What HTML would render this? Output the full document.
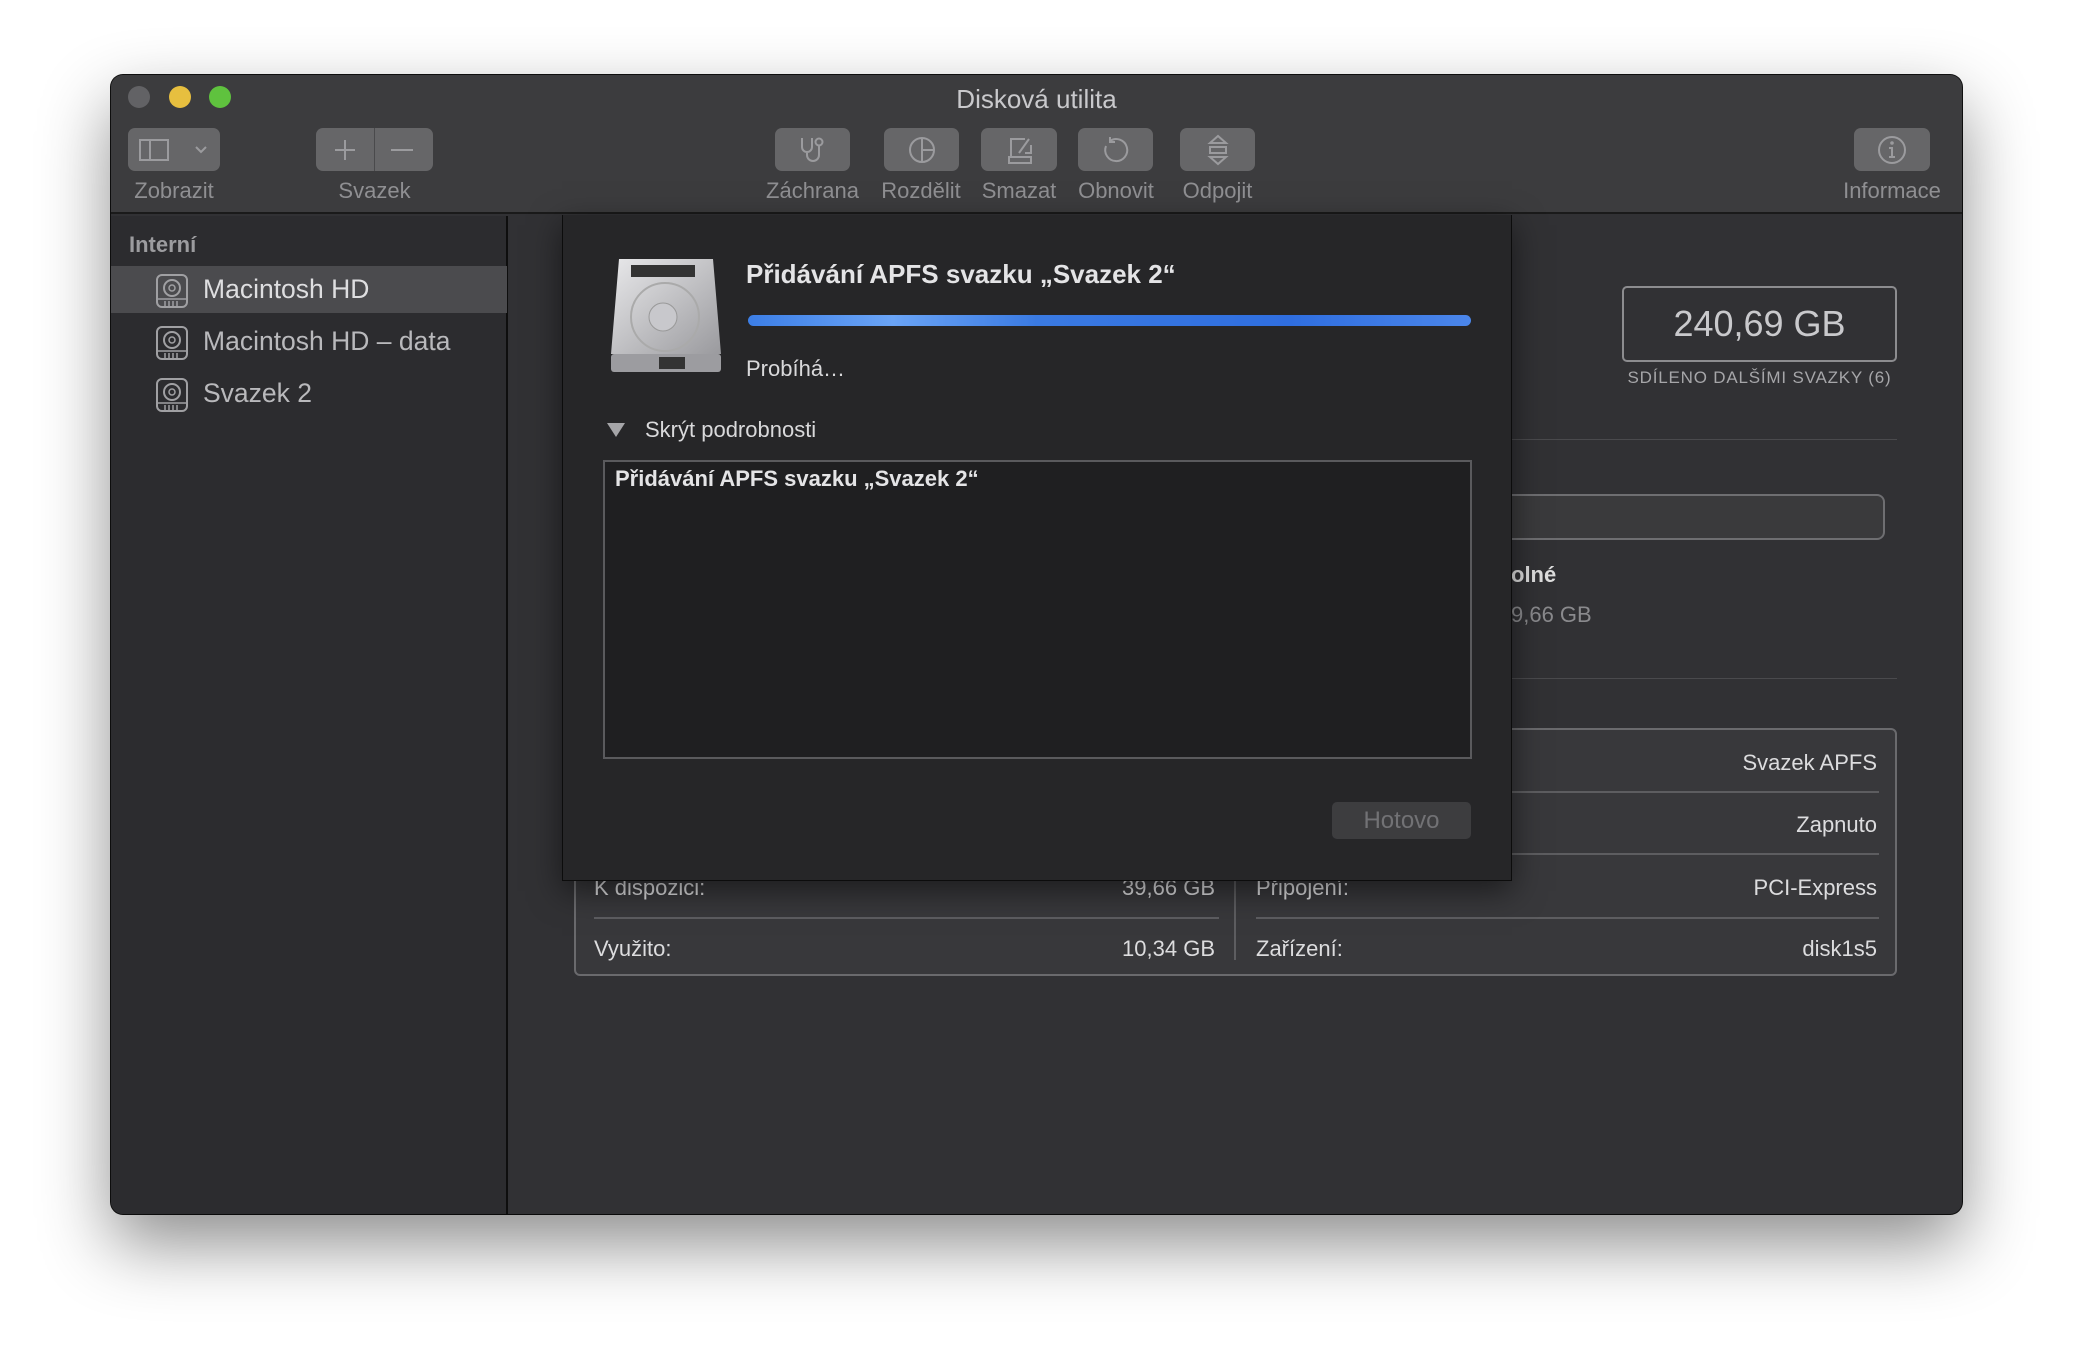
<!DOCTYPE html>
<html><head><meta charset="utf-8"><style>
*{box-sizing:border-box;margin:0;padding:0}
body{width:2074px;height:1364px;background:#fff;position:relative;overflow:hidden;font-family:"Liberation Sans",sans-serif}
.a{position:absolute}
.win{left:111px;top:75px;width:1851px;height:1139px;border-radius:12px;background:#313134;overflow:hidden;box-shadow:0 30px 70px rgba(0,0,0,.45),0 0 0 1px #111}
.tb{left:0;top:0;width:1851px;height:139px;background:#3c3c3e;border-bottom:2px solid #1a1a1a}
.tl{width:22px;height:22px;border-radius:50%;top:11px}
.btn{background:#666668;border-radius:7px;top:53px;height:43px}
.lbl{top:103px;color:#8f8f92;font-size:22px;text-align:center;white-space:nowrap}
.side{left:0;top:141px;width:397px;height:998px;background:#2c2c2f;border-right:2px solid #0e0e0e}
.item{left:0;width:396px;height:47px;color:#b9b9bc;font-size:26.5px;line-height:47px;padding-left:92px}
.hd{left:44px;top:7px}
.dlg{left:451px;top:140px;width:950px;height:666px;background:#262628;border:1px solid #0c0c0c;border-top:none;box-shadow:0 10px 30px rgba(0,0,0,.5)}
.row{color:#dcdcde;font-size:22px}
.ln{height:2px;background:#5d5d60}
</style></head><body>
<div class="a win">
 <div class="a tb">
  <div class="a tl" style="left:17px;background:#626265"></div>
  <div class="a tl" style="left:58px;background:#e7bf3f"></div>
  <div class="a tl" style="left:98px;background:#5fc23e"></div>
  <div class="a" style="left:0;width:1851px;top:9px;text-align:center;color:#c9c9cc;font-size:26px">Disková utilita</div>
  <div class="a btn" style="left:17px;width:92px">
   <svg class="a" style="left:10px;top:10px" width="72" height="24"><rect x="2" y="2" width="28" height="20" fill="none" stroke="#9b9b9e" stroke-width="2"/><line x1="12" y1="2" x2="12" y2="22" stroke="#9b9b9e" stroke-width="2"/><path d="M58 9l5 5 5-5" fill="none" stroke="#9b9b9e" stroke-width="2"/></svg>
  </div>
  <div class="a lbl" style="left:17px;width:92px">Zobrazit</div>
  <div class="a btn" style="left:205px;width:117px">
   <div class="a" style="left:58px;top:0;width:1px;height:43px;background:#4a4a4c"></div>
   <svg class="a" style="left:0;top:0" width="117" height="43"><path d="M29 12v20M19 22h20M75 22h22" stroke="#9b9b9e" stroke-width="2"/></svg>
  </div>
  <div class="a lbl" style="left:205px;width:117px">Svazek</div>
  <div class="a btn" style="left:664px;width:75px"><svg class="a" style="left:22px;top:6px" width="32" height="32"><path d="M5 4v9a5 5 0 0 0 10 0V4M10 18v3a6 6 0 0 0 12 0v-9" fill="none" stroke="#9b9b9e" stroke-width="2"/><circle cx="22" cy="8" r="3.5" fill="none" stroke="#9b9b9e" stroke-width="2"/></svg></div>
  <div class="a lbl" style="left:644px;width:115px">Záchrana</div>
  <div class="a btn" style="left:773px;width:75px"><svg class="a" style="left:23px;top:7px" width="30" height="30"><circle cx="15" cy="15" r="12" fill="none" stroke="#9b9b9e" stroke-width="2"/><path d="M15 3v24M15 15h12" fill="none" stroke="#9b9b9e" stroke-width="2"/></svg></div>
  <div class="a lbl" style="left:750px;width:120px">Rozdělit</div>
  <div class="a btn" style="left:870px;width:76px"><svg class="a" style="left:24px;top:7px" width="30" height="30"><path d="M4 22h22v6H4zM6 22V4h14M24 4l-10 14M20 18h6V10" fill="none" stroke="#9b9b9e" stroke-width="2"/></svg></div>
  <div class="a lbl" style="left:850px;width:116px">Smazat</div>
  <div class="a btn" style="left:967px;width:75px"><svg class="a" style="left:23px;top:6px" width="30" height="32"><path d="M9 7a11 11 0 1 1-4 5M9 3v5h5" fill="none" stroke="#9b9b9e" stroke-width="2"/></svg></div>
  <div class="a lbl" style="left:950px;width:110px">Obnovit</div>
  <div class="a btn" style="left:1069px;width:75px"><svg class="a" style="left:26px;top:6px" width="24" height="32"><path d="M4 9L12 2l8 7zM4 23l8 7 8-7zM4 13h16v6H4z" fill="none" stroke="#9b9b9e" stroke-width="2"/></svg></div>
  <div class="a lbl" style="left:1050px;width:113px">Odpojit</div>
  <div class="a btn" style="left:1743px;width:76px"><svg class="a" style="left:22px;top:6px" width="32" height="32"><circle cx="16" cy="16" r="13" fill="none" stroke="#9b9b9e" stroke-width="2"/><circle cx="16" cy="9" r="1.8" fill="#9b9b9e"/><path d="M13 14h3v9M13 23h6" stroke="#9b9b9e" stroke-width="2" fill="none"/></svg></div>
  <div class="a lbl" style="left:1720px;width:122px">Informace</div>
 </div>
 <div class="a side">
  <div class="a" style="left:18px;top:16px;color:#9c9c9f;font-size:22px;font-weight:bold">Interní</div>
  <div class="a item" style="top:50px;background:#4b4b4e;color:#dedee0">Macintosh HD<svg class="a hd" width="34" height="36"><rect x="2" y="2" width="30" height="32" rx="5" fill="none" stroke="#a0a0a3" stroke-width="2"/><circle cx="17" cy="15" r="8" fill="none" stroke="#a0a0a3" stroke-width="2"/><circle cx="17" cy="15" r="3" fill="none" stroke="#a0a0a3" stroke-width="1.5"/><path d="M2 26h30M10 28v5M14 28v5M18 28v5M22 28v5" stroke="#a0a0a3" stroke-width="1.5"/></svg></div>
  <div class="a item" style="top:102px">Macintosh HD – data<svg class="a hd" width="34" height="36"><rect x="2" y="2" width="30" height="32" rx="5" fill="none" stroke="#a0a0a3" stroke-width="2"/><circle cx="17" cy="15" r="8" fill="none" stroke="#a0a0a3" stroke-width="2"/><circle cx="17" cy="15" r="3" fill="none" stroke="#a0a0a3" stroke-width="1.5"/><path d="M2 26h30M10 28v5M14 28v5M18 28v5M22 28v5" stroke="#a0a0a3" stroke-width="1.5"/></svg></div>
  <div class="a item" style="top:154px">Svazek 2<svg class="a hd" width="34" height="36"><rect x="2" y="2" width="30" height="32" rx="5" fill="none" stroke="#a0a0a3" stroke-width="2"/><circle cx="17" cy="15" r="8" fill="none" stroke="#a0a0a3" stroke-width="2"/><circle cx="17" cy="15" r="3" fill="none" stroke="#a0a0a3" stroke-width="1.5"/><path d="M2 26h30M10 28v5M14 28v5M18 28v5M22 28v5" stroke="#a0a0a3" stroke-width="1.5"/></svg></div>
 </div>
 <!-- content -->
 <div class="a" style="left:1511px;top:211px;width:275px;height:76px;border:2px solid #8c8c8f;border-radius:5px;color:#c9c9cc;font-size:36px;text-align:center;line-height:72px">240,69 GB</div>
 <div class="a" style="left:1490px;top:293px;width:317px;text-align:center;color:#a6a6a9;font-size:17px;letter-spacing:.8px">SDÍLENO DALŠÍMI SVAZKY (6)</div>
 <div class="a ln" style="left:463px;top:364px;width:1323px;height:1px;background:#4a4a4d"></div>
 <div class="a" style="left:900px;top:419px;width:874px;height:46px;border:2px solid #6e6e71;border-radius:8px;background:#3a3a3c"></div>
 <div class="a" style="left:1400px;top:487px;color:#ddd;font-size:22px;font-weight:bold">olné</div>
 <div class="a" style="left:1400px;top:527px;color:#8a8a8d;font-size:22px">9,66 GB</div>
 <div class="a ln" style="left:463px;top:603px;width:1323px;height:1px;background:#4a4a4d"></div>
 <div class="a" style="left:463px;top:653px;width:1323px;height:248px;border:2px solid #6a6a6d;border-radius:6px;background:#38383b">
  <div class="a" style="left:658px;top:20px;width:2px;height:210px;background:#5d5d60"></div>
  <div class="a ln" style="left:18px;top:187px;width:625px"></div>
  <div class="a row" style="left:18px;top:145px">K dispozici:</div><div class="a row" style="right:680px;top:145px">39,66 GB</div>
  <div class="a row" style="left:18px;top:206px">Využito:</div><div class="a row" style="right:680px;top:206px">10,34 GB</div>
  <div class="a ln" style="left:680px;top:61px;width:623px"></div>
  <div class="a ln" style="left:680px;top:123px;width:623px"></div>
  <div class="a ln" style="left:680px;top:187px;width:623px"></div>
  <div class="a row" style="right:18px;top:20px">Svazek APFS</div>
  <div class="a row" style="right:18px;top:82px">Zapnuto</div>
  <div class="a row" style="left:680px;top:145px">Připojení:</div><div class="a row" style="right:18px;top:145px">PCI-Express</div>
  <div class="a row" style="left:680px;top:206px">Zařízení:</div><div class="a row" style="right:18px;top:206px">disk1s5</div>
 </div>
 <!-- dialog -->
 <div class="a dlg">
  <svg class="a" style="left:46px;top:42px" width="114" height="118"><defs><linearGradient id="g" x1="0" y1="0" x2="1" y2="1"><stop offset="0" stop-color="#e8e8ea"/><stop offset="1" stop-color="#9a9a9e"/></linearGradient></defs><path d="M10 2h94l8 95H2z" fill="url(#g)"/><rect x="2" y="97" width="110" height="18" rx="3" fill="#9c9ca0"/><circle cx="56" cy="60" r="34" fill="none" stroke="#aaa" stroke-width="2"/><circle cx="54" cy="60" r="14" fill="#c8c8cc" stroke="#999"/><rect x="22" y="8" width="64" height="12" fill="#333"/><path d="M50 100h26v12H50z" fill="#333"/></svg>
  <div class="a" style="left:183px;top:44px;color:#e4e4e6;font-size:26px;font-weight:bold">Přidávání APFS svazku „Svazek 2“</div>
  <div class="a" style="left:185px;top:100px;width:723px;height:11px;border-radius:6px;background:linear-gradient(90deg,#3c7ee6,#6aa4f6 20%,#3a7ae2 40%,#2f6ee0 75%,#4b86ea)"></div>
  <div class="a" style="left:183px;top:141px;color:#d9d9db;font-size:22px">Probíhá…</div>
  <svg class="a" style="left:43px;top:206px" width="20" height="18"><path d="M1 2h18L10 16z" fill="#a5a5a8"/></svg>
  <div class="a" style="left:82px;top:202px;color:#d9d9db;font-size:22px">Skrýt podrobnosti</div>
  <div class="a" style="left:40px;top:245px;width:869px;height:299px;background:#1f1f21;border:2px solid #5a5a5d;padding:4px 10px;color:#e4e4e6;font-size:22px;font-weight:bold">Přidávání APFS svazku „Svazek 2“</div>
  <div class="a" style="left:769px;top:587px;width:139px;height:37px;background:#3d3d3f;border-radius:5px;color:#727275;font-size:24px;text-align:center;line-height:37px">Hotovo</div>
 </div>
</div>
</body></html>
